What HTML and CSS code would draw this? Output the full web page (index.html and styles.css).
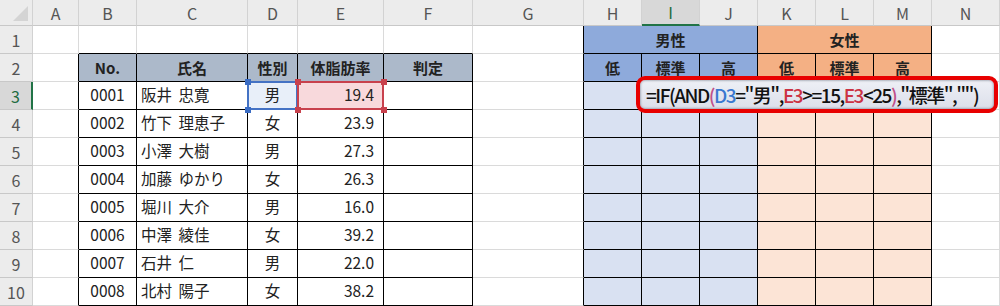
FILE: index.html
```html
<!DOCTYPE html>
<html lang="ja">
<head>
<meta charset="utf-8">
<title>Excel IF AND</title>
<link rel="stylesheet" href="styles.css">
</head>
<body>
<div class="sheet">
  <div class="h corner"><span class="tri"></span></div>
  <div class="h">A</div><div class="h">B</div><div class="h">C</div><div class="h">D</div><div class="h">E</div><div class="h">F</div><div class="h">G</div><div class="h">H</div><div class="h selc">I</div><div class="h">J</div><div class="h">K</div><div class="h">L</div><div class="h">M</div><div class="h">N</div>

  <div class="rh">1</div>
  <div class="c"></div>
  <div class="c tb"></div><div class="c tb"></div><div class="c tb"></div><div class="c tb"></div><div class="c tb"></div>
  <div class="c tl"></div>
  <div class="c k bl hd span3">男性</div>
  <div class="c k or hd span3">女性</div>
  <div class="c"></div>

  <div class="rh">2</div>
  <div class="c tl"></div>
  <div class="c k th hd">No.</div><div class="c k th hd">氏名</div><div class="c k th hd">性別</div><div class="c k th hd">体脂肪率</div><div class="c k th hd">判定</div>
  <div class="c tl"></div>
  <div class="c k bl hd">低</div><div class="c k bl hd">標準</div><div class="c k bl hd">高</div>
  <div class="c k or hd">低</div><div class="c k or hd">標準</div><div class="c k or hd">高</div>
  <div class="c"></div>

  <div class="rh selr">3</div>
  <div class="c tl"></div>
  <div class="c k ce">0001</div><div class="c k nm">阪井 忠寛</div>
  <div class="c k ce ref refd">男<i class="q q1"></i><i class="q q2"></i><i class="q q3"></i><i class="q q4"></i></div>
  <div class="c k ra ref refe">19.4<i class="q q1"></i><i class="q q2"></i><i class="q q3"></i><i class="q q4"></i></div>
  <div class="c k"></div>
  <div class="c tl"></div>
  <div class="c k bll"></div><div class="c k bll"></div><div class="c k bll"></div>
  <div class="c k orl"></div><div class="c k orl"></div><div class="c k orl"></div>
  <div class="c"></div>

  <div class="rh">4</div>
  <div class="c tl"></div>
  <div class="c k ce">0002</div><div class="c k nm">竹下 理恵子</div><div class="c k ce">女</div><div class="c k ra">23.9</div><div class="c k"></div>
  <div class="c tl"></div>
  <div class="c k bll"></div><div class="c k bll"></div><div class="c k bll"></div>
  <div class="c k orl"></div><div class="c k orl"></div><div class="c k orl"></div>
  <div class="c"></div>

  <div class="rh">5</div>
  <div class="c tl"></div>
  <div class="c k ce">0003</div><div class="c k nm">小澤 大樹</div><div class="c k ce">男</div><div class="c k ra">27.3</div><div class="c k"></div>
  <div class="c tl"></div>
  <div class="c k bll"></div><div class="c k bll"></div><div class="c k bll"></div>
  <div class="c k orl"></div><div class="c k orl"></div><div class="c k orl"></div>
  <div class="c"></div>

  <div class="rh">6</div>
  <div class="c tl"></div>
  <div class="c k ce">0004</div><div class="c k nm">加藤 ゆかり</div><div class="c k ce">女</div><div class="c k ra">26.3</div><div class="c k"></div>
  <div class="c tl"></div>
  <div class="c k bll"></div><div class="c k bll"></div><div class="c k bll"></div>
  <div class="c k orl"></div><div class="c k orl"></div><div class="c k orl"></div>
  <div class="c"></div>

  <div class="rh">7</div>
  <div class="c tl"></div>
  <div class="c k ce">0005</div><div class="c k nm">堀川 大介</div><div class="c k ce">男</div><div class="c k ra">16.0</div><div class="c k"></div>
  <div class="c tl"></div>
  <div class="c k bll"></div><div class="c k bll"></div><div class="c k bll"></div>
  <div class="c k orl"></div><div class="c k orl"></div><div class="c k orl"></div>
  <div class="c"></div>

  <div class="rh">8</div>
  <div class="c tl"></div>
  <div class="c k ce">0006</div><div class="c k nm">中澤 綾佳</div><div class="c k ce">女</div><div class="c k ra">39.2</div><div class="c k"></div>
  <div class="c tl"></div>
  <div class="c k bll"></div><div class="c k bll"></div><div class="c k bll"></div>
  <div class="c k orl"></div><div class="c k orl"></div><div class="c k orl"></div>
  <div class="c"></div>

  <div class="rh">9</div>
  <div class="c tl"></div>
  <div class="c k ce">0007</div><div class="c k nm">石井 仁</div><div class="c k ce">男</div><div class="c k ra">22.0</div><div class="c k"></div>
  <div class="c tl"></div>
  <div class="c k bll"></div><div class="c k bll"></div><div class="c k bll"></div>
  <div class="c k orl"></div><div class="c k orl"></div><div class="c k orl"></div>
  <div class="c"></div>

  <div class="rh">10</div>
  <div class="c tl"></div>
  <div class="c k ce">0008</div><div class="c k nm">北村 陽子</div><div class="c k ce">女</div><div class="c k ra">38.2</div><div class="c k"></div>
  <div class="c tl"></div>
  <div class="c k bll"></div><div class="c k bll"></div><div class="c k bll"></div>
  <div class="c k orl"></div><div class="c k orl"></div><div class="c k orl"></div>
  <div class="c"></div>

  <div class="formula">=IF(AND<span class="pm">(</span><span class="fb">D3</span>="男",<span class="fr">E3</span>&gt;=15,<span class="fr">E3</span>&lt;25<span class="pm">)</span>,"標準","")</div>
</div>
</body>
</html>
```

FILE: styles.css
```css
* { box-sizing: border-box; }
body {
  margin: 0;
  background: #fff;
  font-family: "Noto Sans CJK JP", "Noto Sans", sans-serif;
  color: #222;
}
.sheet {
  position: relative;
  display: grid;
  grid-template-columns: 33px 46px 58px 111px 50px 86px 89px 111px 58px 58px 58px 58px 58px 58px 68px;
  grid-template-rows: 26px repeat(10, 28px);
  width: 1000px;
  height: 306px;
  overflow: hidden;
}
.h, .rh {
  background: #ececec;
  color: #555;
  font-size: 16px;
  display: flex;
  align-items: center;
  justify-content: center;
  border-right: 1px solid #d2d2d2;
  border-bottom: 1px solid #c8c8c8;
  line-height: 1;
}
.corner { position: relative; }
.tri {
  position: absolute;
  right: 4px;
  bottom: 4px;
  width: 0;
  height: 0;
  border-left: 15px solid transparent;
  border-bottom: 15px solid #d4d4d4;
}
.selc {
  background: #d8d8d8;
  color: #1e6b3f;
  border-bottom: 2px solid #217346;
}
.selr {
  background: #d8d8d8;
  color: #1e6b3f;
  border-right: 2px solid #217346;
}
.c {
  border-right: 1px solid #dadada;
  border-bottom: 1px solid #dadada;
  display: flex;
  align-items: center;
  font-size: 15.5px;
  line-height: 1;
  padding-bottom: 1px;
  white-space: nowrap;
}
.tb { border-bottom-color: #000; }
.tl { border-right-color: #000; }
.k { border-right-color: #000; border-bottom-color: #000; }
.span3 { grid-column: span 3; }
.hd { justify-content: center; font-weight: 700; font-size: 15px; }
.th { background: #acb9ca; }
.bl { background: #8eaadb; }
.or { background: #f4b084; }
.bll { background: #d9e1f2; }
.orl { background: #fce4d6; }
.ce { justify-content: center; }
.ra { justify-content: flex-end; padding-right: 9px; }
.nm { padding-left: 4px; word-spacing: 3px; }
.ref { position: relative; }
.ref::after {
  content: "";
  position: absolute;
  top: -1px;
  left: -1px;
  right: -1px;
  bottom: -1px;
  border: 2px solid;
}
.refd { background: #e8eff9; }
.refd::after { border-color: #4472c4; }
.refe { background: #f8d9dc; }
.refe::after { border-color: #c8414d; }
.q {
  position: absolute;
  width: 6px;
  height: 6px;
  z-index: 2;
}
.refd .q { background: #3a6cc4; }
.refe .q { background: #c8414d; }
.q1 { top: -3px; left: -3px; }
.q2 { top: -3px; right: -4px; }
.q3 { bottom: -4px; left: -3px; }
.q4 { bottom: -4px; right: -4px; }
.formula {
  position: absolute;
  left: 636px;
  top: 76px;
  width: 362px;
  height: 37px;
  border: 4px solid #e80000;
  border-radius: 9px;
  background: linear-gradient(#eef0f6, #dcdfea);
  box-shadow: inset 0 0 2px 1px rgba(60, 70, 90, 0.35);
  font-size: 19px;
  font-weight: 500;
  line-height: 29px;
  padding-left: 6px;
  letter-spacing: -1.5px;
  color: #111;
  white-space: nowrap;
  z-index: 5;
}
.pm { color: #c0508a; }
.fb { color: #3a78d0; }
.fr { color: #cc3344; }
```
